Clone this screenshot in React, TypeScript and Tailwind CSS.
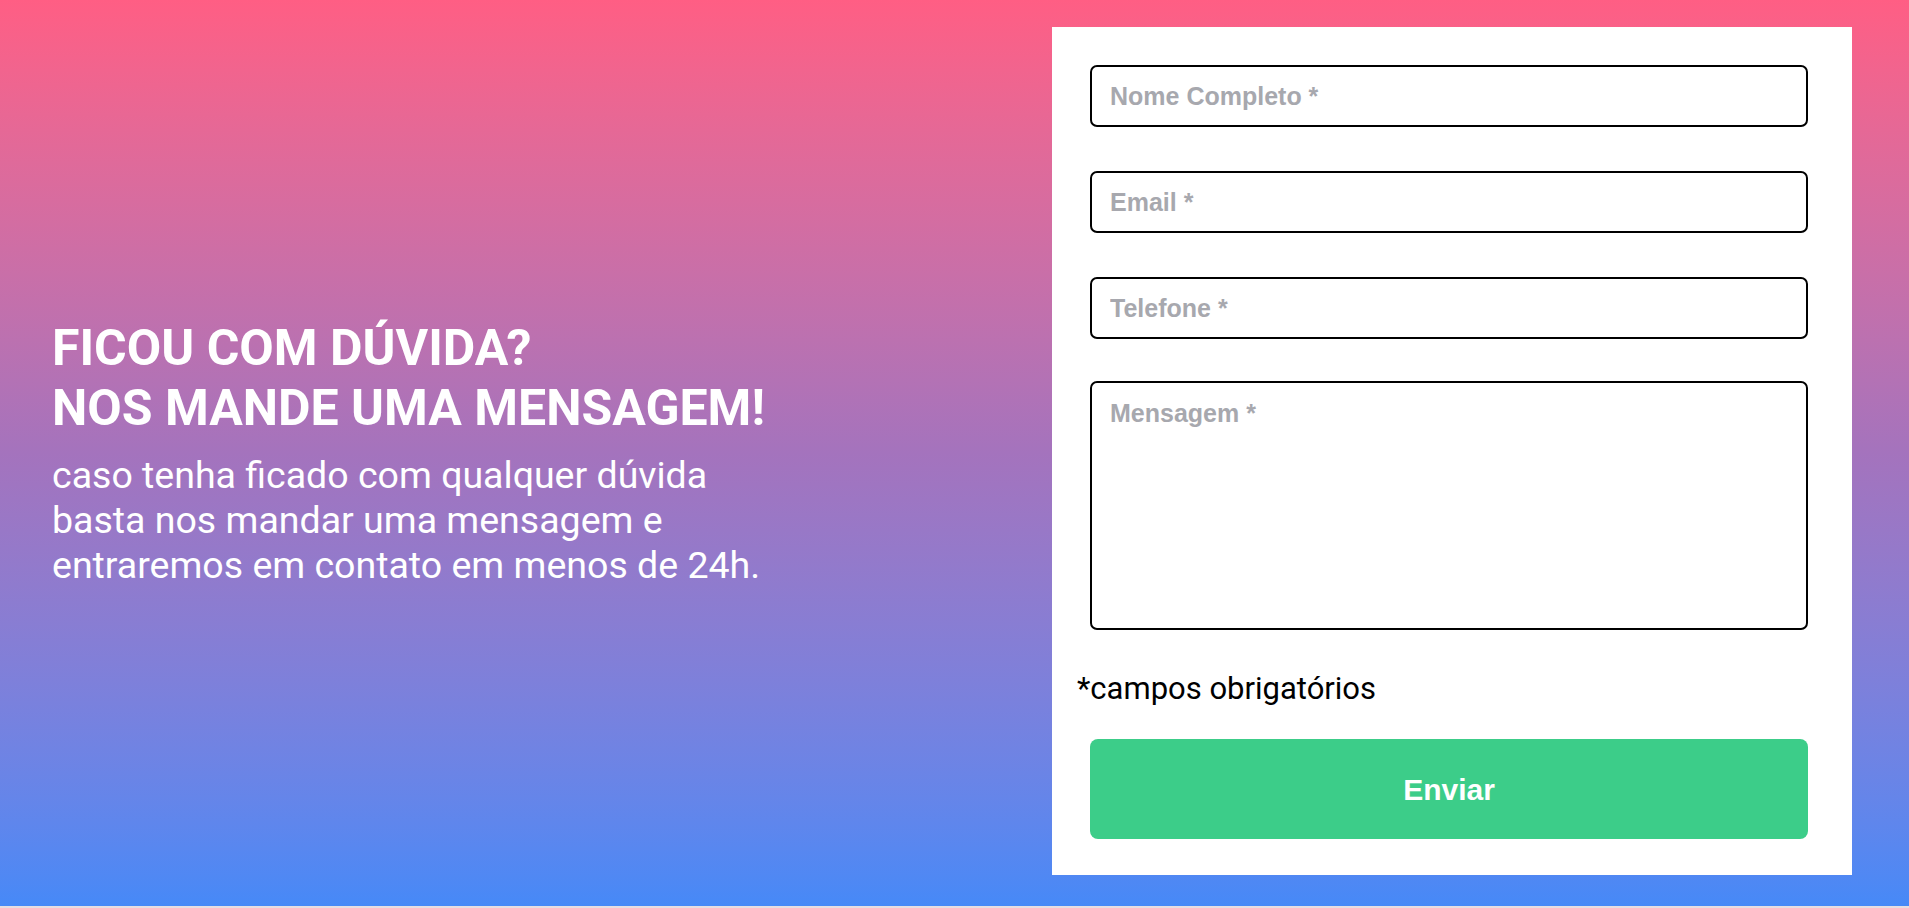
import React from "react";

export default function App() {
  const inputCls =
    "block w-full h-[62px] border-2 border-black rounded-[7px] pl-[18px] pr-4 text-[25px] font-bold text-black bg-white outline-none placeholder:text-[#a7a8ae] placeholder:font-bold";
  return (
    <div className="w-full" style={{ fontFamily: "Roboto, 'Liberation Sans', sans-serif" }}>
      <section className="w-full h-[906px] bg-gradient-to-b from-[#ff5e84] via-[#a473bd] to-[#4689f7] flex items-center justify-between pl-[52px] pr-[57px]">
        <div className="text-white font-['Roboto',sans-serif]">
          <h2 className="text-[50px] leading-[60px] font-bold">
            FICOU COM DÚVIDA?
            <br />
            NOS MANDE UMA MENSAGEM!
          </h2>
          <p className="mt-[15px] text-[37.5px] leading-[45px] font-normal">
            caso tenha ficado com qualquer dúvida
            <br />
            basta nos mandar uma mensagem e
            <br />
            entraremos em contato em menos de 24h.
          </p>
        </div>
        <form
          className="self-start mt-[27px] w-[800px] h-[848px] bg-white flex flex-col pt-[38px] pb-[36px] px-[25px] font-['Liberation_Sans',Arial,sans-serif]"
          onSubmit={(e) => e.preventDefault()}
        >
          <div className="pl-[13px] pr-[19px] flex flex-col">
            <input className={inputCls} placeholder="Nome Completo *" />
            <input className={inputCls + " mt-[44px]"} placeholder="Email *" />
            <input className={inputCls + " mt-[44px]"} placeholder="Telefone *" />
            <textarea
              className="block w-full h-[249px] mt-[42px] border-2 border-black rounded-[7px] pl-[18px] pr-4 pt-[12px] text-[25px] font-bold text-black bg-white outline-none resize-none placeholder:text-[#a7a8ae] placeholder:font-bold"
              placeholder="Mensagem *"
            />
          </div>
          <p className="mt-[41px] text-[31px] leading-[36px] text-black font-['Roboto',sans-serif]">
            *campos obrigatórios
          </p>
          <div className="pl-[13px] pr-[19px] mt-[32px]">
            <button
              type="submit"
              className="w-full h-[100px] rounded-[8px] bg-[#3ccd89] text-white text-[30px] font-bold font-['Liberation_Sans',Arial,sans-serif]"
            >
              Enviar
            </button>
          </div>
        </form>
      </section>
      <div className="h-[2px] bg-[#e6dde2]" />
    </div>
  );
}
